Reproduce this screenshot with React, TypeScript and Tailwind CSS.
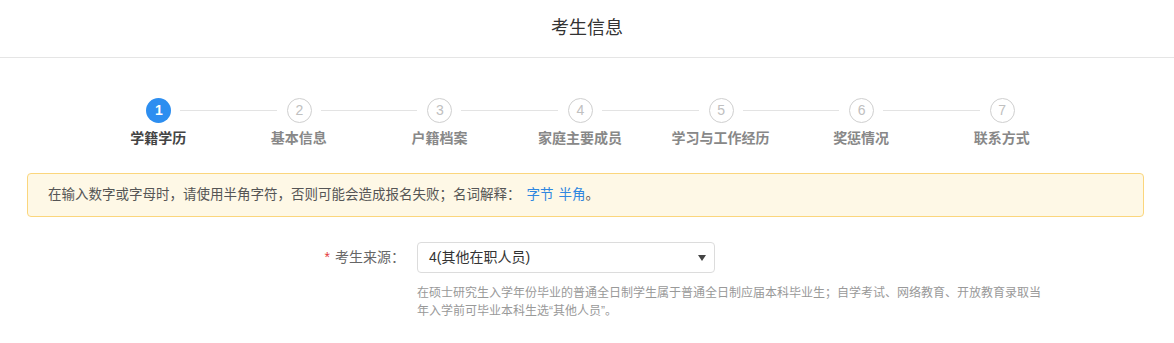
const steps = ["学籍学历", "基本信息", "户籍档案", "家庭主要成员", "学习与工作经历", "奖惩情况", "联系方式"];

const font = { fontFamily: '"Helvetica Neue", "Liberation Sans", "Noto Sans CJK SC", sans-serif' };

export default function App() {
  return (
    <div className="w-[1174px] h-[343px] bg-white text-[#333]" style={font}>
      <div className="h-[58px] border-b border-[#e5e5e5] flex items-center justify-center">
        <h1 className="text-[18px] text-[#333] font-normal">考生信息</h1>
      </div>

      {/* steps */}
      <div className="ml-[88px] w-[984px] grid grid-cols-7 mt-[40px]">
        {steps.map((name, i) => {
          const active = i === 0;
          return (
            <div key={name} className="flex flex-col items-center">
              <div className="flex items-center w-full">
                <div className={`flex-1 h-px mr-[10px] ${i === 0 ? "" : "bg-[#e3e3e3]"}`} />
                <div
                  className={
                    active
                      ? "w-[25px] h-[25px] rounded-full bg-[#2d8ef0] text-white text-[14px] font-bold flex items-center justify-center"
                      : "w-[25px] h-[25px] rounded-full border border-[#cfcfcf] text-[#c0c0c0] text-[14px] flex items-center justify-center"
                  }
                >
                  {i + 1}
                </div>
                <div className={`flex-1 h-px ml-[9px] ${i === steps.length - 1 ? "" : "bg-[#e3e3e3]"}`} />
              </div>
              <div className={`mt-[5px] text-[14px] font-bold leading-[20px] ${active ? "text-[#444]" : "text-[#888]"}`}>
                {name}
              </div>
            </div>
          );
        })}
      </div>

      {/* notice */}
      <div className="mx-[27px] w-[1117px] mt-[25px] h-[44px] rounded-[4px] border border-[#fbd67d] bg-[#fef8e6] flex items-center pl-[20px] text-[13.5px] text-[#555]">
        在输入数字或字母时，请使用半角字符，否则可能会造成报名失败；名词解释：
        <span className="text-[#2f87e0] ml-[6px]">字节</span>
        <span className="text-[#2f87e0] ml-[5px]">半角</span>。
      </div>

      {/* form row */}
      <div className="flex mt-[25px]">
        <div className="w-[417px] flex justify-end items-start">
          <div className="h-[31px] flex items-center text-[14px] text-[#666] pr-[12px]">
            <span className="text-[#e4393c] mr-[5px]">*</span>考生来源：
          </div>
        </div>
        <div>
          <div className="w-[298px] h-[31px] border border-[#dcdcdc] rounded-[4px] flex items-center justify-between px-[11px] text-[14px] text-[#333]">
            <span>4(其他在职人员)</span>
            <svg width="8" height="6" viewBox="0 0 8 6" className="mr-[-3px]">
              <path d="M0 0 H8 L4 6 Z" fill="#444" />
            </svg>
          </div>
          <p className="w-[632px] mt-[11px] text-[12px] leading-[18px] text-[#999]">
            在硕士研究生入学年份毕业的普通全日制学生属于普通全日制应届本科毕业生；自学考试、网络教育、开放教育录取当年入学前可毕业本科生选“其他人员”。
          </p>
        </div>
      </div>
    </div>
  );
}
